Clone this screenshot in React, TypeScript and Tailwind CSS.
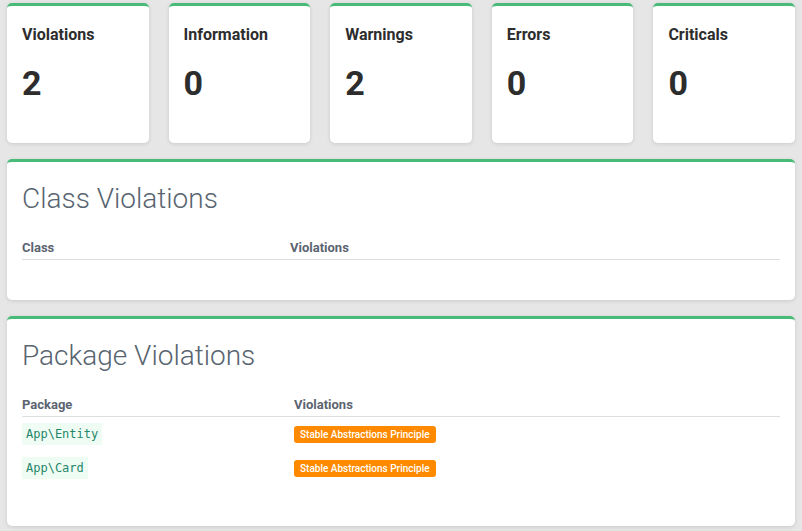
import React from 'react';

const stats = [
  { label: 'Violations', value: 2 },
  { label: 'Information', value: 0 },
  { label: 'Warnings', value: 2 },
  { label: 'Errors', value: 0 },
  { label: 'Criticals', value: 0 },
];

const packages = ['App\\Entity', 'App\\Card'];

const App: React.FC = () => {
  return (
    <div className="min-h-[531px] bg-[#e6e6e6] px-[7px] pt-[3px] font-['Roboto',sans-serif]">
      <div className="flex gap-[20px]">
        {stats.map((s) => (
          <div
            key={s.label}
            className="h-[140px] w-[142px] rounded-[5px] border-t-[3px] border-[#48bb78] bg-white px-[15px] pt-[18px] shadow-[0_1px_4px_rgba(0,0,0,0.12)]"
          >
            <div className="text-[16px] font-bold leading-[22px] text-[#2d2d2d]">{s.label}</div>
            <div className="mt-[18px] text-[34px] font-bold leading-[38px] text-[#2d2d2d]">{s.value}</div>
          </div>
        ))}
      </div>

      <div className="mt-[16px] h-[141px] rounded-[5px] border-t-[3px] border-[#48bb78] bg-white px-[15px] pt-[20px] shadow-[0_1px_4px_rgba(0,0,0,0.12)]">
        <h2 className="text-[28px] font-light leading-[34px] text-[#586470]">Class Violations</h2>
        <table className="mt-[24px] w-full text-left">
          <thead>
            <tr className="border-b border-[#dedede]">
              <th className="w-[268px] pb-[3px] text-[13px] font-bold leading-[16px] text-[#5b6470]">Class</th>
              <th className="pb-[3px] text-[13px] font-bold leading-[16px] text-[#5b6470]">Violations</th>
            </tr>
          </thead>
        </table>
      </div>

      <div className="mt-[16px] h-[210px] rounded-[5px] border-t-[3px] border-[#48bb78] bg-white px-[15px] pt-[20px] shadow-[0_1px_4px_rgba(0,0,0,0.12)]">
        <h2 className="text-[28px] font-light leading-[34px] text-[#586470]">Package Violations</h2>
        <table className="mt-[24px] w-full text-left">
          <thead>
            <tr className="border-b border-[#dedede]">
              <th className="w-[272px] pb-[3px] text-[13px] font-bold leading-[16px] text-[#5b6470]">Package</th>
              <th className="pb-[3px] text-[13px] font-bold leading-[16px] text-[#5b6470]">Violations</th>
            </tr>
          </thead>
          <tbody>
            {packages.map((p) => (
              <tr key={p}>
                <td className="py-[6px] align-middle leading-none">
                  <code className="block w-fit bg-[#effcf3] px-[4px] font-['DejaVu_Sans_Mono',monospace] text-[12px] leading-[22px] text-[#24876a]">
                    {p}
                  </code>
                </td>
                <td className="py-[6px] align-middle leading-none">
                  <span className="block w-fit rounded-[3px] bg-[#ff8a00] px-[6px] text-[10px] font-medium leading-[17px] text-white">
                    Stable Abstractions Principle
                  </span>
                </td>
              </tr>
            ))}
          </tbody>
        </table>
      </div>
    </div>
  );
};

export default App;
